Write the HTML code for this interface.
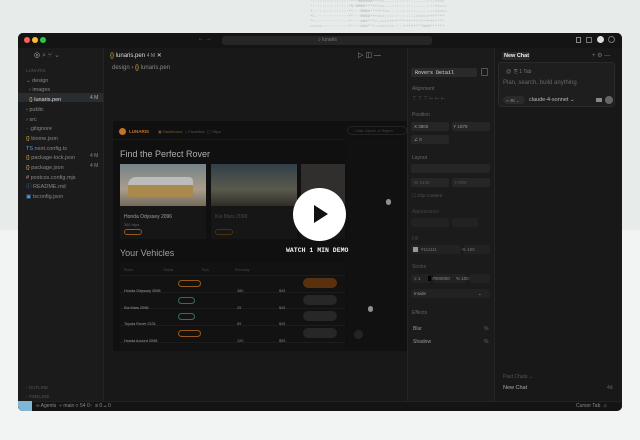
<!DOCTYPE html>
<html><head><style>
*{margin:0;padding:0;box-sizing:border-box}
body{width:640px;height:440px;overflow:hidden;font-family:"Liberation Sans",sans-serif;background:#f2f4f3;position:relative;color:#bbb}
.a{position:absolute}
.t{font-size:6px;white-space:nowrap}
</style></head><body>
<div class="a" style="left:0;top:0;width:640px;height:230px;background:#e7ebe9"></div>
<div class="a t" style="left:310px;top:0;width:170px;height:33px;color:#a9b8ae;font-family:'Liberation Mono',monospace;font-size:4px;line-height:5px;overflow:hidden;white-space:pre">···:::::::::::::·+**%%%%%%**+==----::::::::-----::::====
···:::::::::::::*%·%%%%***+++==---::::::::-------:::+====
+···::::::::::::*+···%%%#***+++==---::::::::------::=====
+=-·············+*···%%%#*++===:::::::::::--=====+++****
*+-·············+*···###***=-====+++****++****+*++++****
=====-:·········+*···###**+-====+==·:··++++****###*****+</div>
<div class="a" style="left:18px;top:33px;width:604px;height:378px;background:#181818;border-radius:5px;overflow:hidden">
 <div class="a" style="left:0;top:0;width:604px;height:15px;background:#141414"></div>
 <div class="a" style="left:6px;top:4px;width:6px;height:6px;border-radius:3px;background:#fe5f57"></div>
 <div class="a" style="left:14px;top:4px;width:6px;height:6px;border-radius:3px;background:#febc2e"></div>
 <div class="a" style="left:22px;top:4px;width:6px;height:6px;border-radius:3px;background:#28c840"></div>
 <div class="a t" style="left:180px;top:3px;color:#666">← →</div>
 <div class="a" style="left:204px;top:3px;width:210px;height:9px;background:#262626;border-radius:3px"></div>
 <div class="a t" style="left:300px;top:4px;color:#777;font-size:5px">⌕ lunaris</div>
 <div class="a" style="left:558px;top:4px;width:5px;height:6px;border:1px solid #888"></div>
 <div class="a" style="left:568px;top:4px;width:6px;height:6px;border:1px solid #777"></div>
 <div class="a" style="left:579px;top:3px;width:7px;height:7px;border-radius:4px;background:#ddd"></div>
 <div class="a" style="left:590px;top:3px;width:7px;height:7px;border-radius:4px;border:1px solid #777"></div>
 <!-- sidebar -->
 <div class="a" style="left:0;top:15px;width:86px;height:353px;background:#1b1b1b;border-right:1px solid #252525"></div>
 <div class="a t" style="left:16px;top:18px;color:#bbb;font-size:7px">◎ <span style="color:#777">⌕ ⑂ ⌄</span></div>
 <div class="a" style="left:0;top:60px;width:85px;height:9px;background:#2a2d30"></div>
 <div class="a t" style="left:8px;top:33px;color:#888;font-size:5.5px;line-height:9.7px"><span style="color:#555;font-size:4.5px">LUNARIS</span><br>⌄ design<br>&nbsp;&nbsp;› images<br>&nbsp;&nbsp;<span style="color:#e8b84a">{}</span> <span style="color:#ddd">lunaris.pen</span><br>› public<br>› src<br>· .gitignore<br><span style="color:#e8b84a">{}</span> biome.json<br><span style="color:#5a9ae0">TS</span> next.config.ts<br><span style="color:#e8b84a">{}</span> package-lock.json<br><span style="color:#e8b84a">{}</span> package.json<br><span style="color:#d9a">#</span> postcss.config.mjs<br><span style="color:#5a9ae0">ⓘ</span> README.md<br><span style="color:#5a9ae0">▣</span> tsconfig.json</div>
 <div class="a t" style="left:72px;top:62px;color:#aaa;font-size:5px">4 M</div>
 <div class="a t" style="left:72px;top:120px;color:#888;font-size:5px">4 M</div>
 <div class="a t" style="left:72px;top:130px;color:#888;font-size:5px">4 M</div>
 <div class="a t" style="left:8px;top:350px;color:#555;font-size:4.5px;line-height:9px">› OUTLINE<br>› TIMELINE</div>
 <!-- editor -->
 <div class="a" style="left:86px;top:15px;width:303px;height:353px;background:#181818"></div>
 <div class="a t" style="left:92px;top:19px;color:#ddd;font-size:6px"><span style="color:#e8b84a">{}</span> lunaris.pen <span style="color:#999;font-size:5px">4 M</span> ✕</div>
 <div class="a t" style="left:94px;top:32px;color:#888;font-size:6px">design › <span style="color:#e8b84a">{}</span> lunaris.pen</div>
 <div class="a t" style="left:340px;top:18px;color:#999;font-size:7px">▷ ◫ —</div>
 <!-- canvas frame -->
 <div class="a" style="left:95px;top:88px;width:294px;height:230px;background:#131313"></div>
 <div class="a" style="left:101px;top:95px;width:7px;height:7px;border-radius:4px;background:#e9872a"></div>
 <div class="a t" style="left:111px;top:96px;color:#e9872a;font-size:4.5px;font-weight:bold">LUNARIS</div>
 <div class="a t" style="left:140px;top:96px;color:#8a6a40;font-size:4px">▣ Dashboard &nbsp;<span style="color:#666">○ Favorites &nbsp;▢ Trips</span></div>
 <div class="a" style="left:329px;top:93px;width:60px;height:9px;border-radius:5px;border:1px solid #2a2a2a"></div>
 <div class="a t" style="left:335px;top:96px;color:#555;font-size:3.5px">○ Date, Airport, or Region</div>
 <div class="a" style="left:95px;top:106px;width:232px;height:1px;background:#222"></div>
 <div class="a t" style="left:102px;top:116px;color:#ccc;font-size:9px">Find the Perfect Rover</div>
 <div class="a" style="left:102px;top:131px;width:86px;height:75px;background:#1a1a1a"></div>
 <div class="a" style="left:102px;top:131px;width:86px;height:42px;background:linear-gradient(#8a9aa0,#c7b9a4 60%,#8a7d6a)"></div>
 <div class="a" style="left:110px;top:144px;width:65px;height:20px;background:#c9a05a;border-radius:8px 4px 3px 3px"></div>
 <div class="a" style="left:110px;top:144px;width:65px;height:8px;background:#ddd;border-radius:8px 4px 0 0"></div>
 <div class="a t" style="left:106px;top:181px;color:#bbb;font-size:5px">Honda Odyssey 2096</div>
 <div class="a t" style="left:106px;top:189px;color:#777;font-size:4px">380 trips</div>
 <div class="a" style="left:106px;top:196px;width:18px;height:6px;border:1px solid #b06a20;border-radius:3px"></div>
 <div class="a" style="left:193px;top:131px;width:86px;height:75px;background:#1a1a1a"></div>
 <div class="a" style="left:193px;top:131px;width:86px;height:42px;background:linear-gradient(#3a4a55,#6a6a5a 60%,#3a3530)"></div>
 <div class="a t" style="left:197px;top:181px;color:#555;font-size:5px">Kia Mars 2098</div>
 <div class="a" style="left:197px;top:196px;width:18px;height:6px;border:1px solid #5a3a15;border-radius:3px"></div>
 <div class="a" style="left:283px;top:131px;width:44px;height:42px;background:#3a3835"></div>
 <div class="a" style="left:283px;top:173px;width:44px;height:33px;background:#1a1a1a"></div>
 <div class="a t" style="left:102px;top:215px;color:#bbb;font-size:9px">Your Vehicles</div>
 <div class="a" style="left:102px;top:229px;width:225px;height:89px;background:#161616"></div>
 <div class="a" style="left:102px;top:242px;width:225px;height:1px;background:#222"></div>
 <div class="a" style="left:102px;top:259px;width:225px;height:1px;background:#222"></div>
 <div class="a" style="left:102px;top:275px;width:225px;height:1px;background:#222"></div>
 <div class="a" style="left:102px;top:292px;width:225px;height:1px;background:#222"></div>
 <div class="a" style="left:102px;top:309px;width:225px;height:1px;background:#222"></div>
 <div class="a t" style="left:106px;top:235px;color:#555;font-size:3.5px">Rover<span style="margin-left:30px">Status</span><span style="margin-left:28px">Trips</span><span style="margin-left:26px">Price/day</span></div>
 <div class="a t" style="left:106px;top:250px;color:#bbb;font-size:3.8px;line-height:16.5px">Honda Odyssey 2096<br>Kia Mars 2098<br>Toyota Rover 2101<br>Honda Accord 2098</div>
 <div class="a t" style="left:219px;top:250px;color:#999;font-size:3.8px;line-height:16.5px">380<br>25<br>89<br>120</div>
 <div class="a t" style="left:261px;top:250px;color:#999;font-size:3.8px;line-height:16.5px">$45<br>$45<br>$45<br>$55</div>
 <div class="a" style="left:160px;top:247px;width:23px;height:7px;border:1px solid #b06a20;border-radius:4px"></div>
 <div class="a" style="left:160px;top:264px;width:17px;height:7px;border:1px solid #4a7a80;border-radius:4px"></div>
 <div class="a" style="left:160px;top:280px;width:17px;height:7px;border:1px solid #4a7a80;border-radius:4px"></div>
 <div class="a" style="left:160px;top:297px;width:23px;height:7px;border:1px solid #b06a20;border-radius:4px"></div>
 <div class="a" style="left:285px;top:245px;width:34px;height:10px;background:#6a3a12;border-radius:5px"></div>
 <div class="a" style="left:285px;top:262px;width:34px;height:10px;background:#2e2e2e;border-radius:5px"></div>
 <div class="a" style="left:285px;top:278px;width:34px;height:10px;background:#2e2e2e;border-radius:5px"></div>
 <div class="a" style="left:285px;top:295px;width:34px;height:10px;background:#2e2e2e;border-radius:5px"></div>
 <div class="a" style="left:329px;top:106px;width:60px;height:212px;background:#151515"></div>
 <div class="a" style="left:368px;top:166px;width:5px;height:6px;border-radius:3px;background:#aaa"></div>
 <div class="a" style="left:350px;top:273px;width:5px;height:6px;border-radius:3px;background:#aaa"></div>
 <div class="a" style="left:336px;top:297px;width:9px;height:9px;border-radius:5px;background:#2a2a2a"></div>
 <div class="a" style="left:95px;top:88px;width:294px;height:230px;background:rgba(0,0,0,0.15)"></div>
 <!-- play overlay -->
 <div class="a" style="left:275px;top:155px;width:53px;height:53px;border-radius:27px;background:#fff"></div>
 <div class="a" style="left:296px;top:172px;width:0;height:0;border-left:14px solid #111;border-top:9px solid transparent;border-bottom:9px solid transparent"></div>
 <div class="a t" style="left:268px;top:214px;color:#eee;font-family:'Liberation Mono',monospace;font-size:6.5px;font-weight:bold">WATCH 1 MIN DEMO</div>
 <!-- properties -->
 <div class="a" style="left:389px;top:15px;width:88px;height:353px;background:#1b1b1b;border-left:1px solid #252525;border-right:1px solid #252525"></div>
 <div class="a" style="left:393px;top:35px;width:66px;height:9px;background:#2a2a2a;border-radius:2px"></div>
 <div class="a t" style="left:397px;top:37px;color:#ddd;font-family:'Liberation Mono',monospace;font-size:5px">Rovers Detail</div>
 <div class="a" style="left:463px;top:35px;width:7px;height:8px;border:1px solid #555;border-radius:1px"></div>
 <div class="a t" style="left:394px;top:53px;color:#666;font-size:5px">Alignment</div>
 <div class="a t" style="left:394px;top:63px;color:#555;font-size:5px">⊤ ⊤ ⊤ ⊢ ⊢ ⊢</div>
 <div class="a t" style="left:394px;top:79px;color:#666;font-size:5px">Position</div>
 <div class="a" style="left:393px;top:89px;width:38px;height:9px;background:#262626;border-radius:2px"></div>
 <div class="a" style="left:434px;top:89px;width:38px;height:9px;background:#262626;border-radius:2px"></div>
 <div class="a" style="left:393px;top:102px;width:38px;height:9px;background:#262626;border-radius:2px"></div>
 <div class="a t" style="left:396px;top:91px;color:#999;font-size:4.5px">X 3800<span style="margin-left:25px">Y 1879</span></div>
 <div class="a t" style="left:396px;top:104px;color:#999;font-size:4.5px">∠ 0</div>
 <div class="a t" style="left:394px;top:122px;color:#666;font-size:5px">Layout</div>
 <div class="a" style="left:393px;top:131px;width:79px;height:9px;background:#262626;border-radius:2px"></div>
 <div class="a" style="left:393px;top:145px;width:38px;height:9px;background:#262626;border-radius:2px"></div>
 <div class="a" style="left:434px;top:145px;width:38px;height:9px;background:#262626;border-radius:2px"></div>
 <div class="a t" style="left:396px;top:147px;color:#555;font-size:4.5px">W 1440<span style="margin-left:25px">H 900</span></div>
 <div class="a t" style="left:394px;top:160px;color:#555;font-size:4.5px">☐ Clip Content</div>
 <div class="a t" style="left:394px;top:176px;color:#444;font-size:5px">Appearance</div>
 <div class="a" style="left:393px;top:185px;width:38px;height:9px;background:#222;border-radius:2px"></div>
 <div class="a" style="left:434px;top:185px;width:26px;height:9px;background:#222;border-radius:2px"></div>
 <div class="a t" style="left:394px;top:203px;color:#444;font-size:5px">Fill</div>
 <div class="a" style="left:393px;top:212px;width:50px;height:9px;background:#222;border-radius:2px"></div>
 <div class="a" style="left:446px;top:212px;width:26px;height:9px;background:#222;border-radius:2px"></div>
 <div class="a" style="left:395px;top:214px;width:5px;height:5px;background:#999"></div>
 <div class="a t" style="left:403px;top:214px;color:#777;font-size:4.5px">#111111<span style="margin-left:25px">% 100</span></div>
 <div class="a t" style="left:394px;top:231px;color:#555;font-size:5px">Stroke</div>
 <div class="a" style="left:393px;top:241px;width:19px;height:9px;background:#222;border-radius:2px"></div>
 <div class="a" style="left:415px;top:241px;width:33px;height:9px;background:#222;border-radius:2px"></div>
 <div class="a" style="left:451px;top:241px;width:21px;height:9px;background:#222;border-radius:2px"></div>
 <div class="a t" style="left:396px;top:243px;color:#888;font-size:4.5px">≡ 1<span style="margin-left:8px"><span style="background:#000;color:#000">■</span> #000000</span><span style="margin-left:6px">% 100</span></div>
 <div class="a" style="left:393px;top:256px;width:79px;height:9px;background:#222;border-radius:2px"></div>
 <div class="a t" style="left:396px;top:258px;color:#999;font-size:4.5px">Inside<span style="margin-left:52px">⌄</span></div>
 <div class="a t" style="left:394px;top:277px;color:#666;font-size:5px">Effects</div>
 <div class="a t" style="left:395px;top:290px;color:#999;font-size:5px;line-height:13px">Blur<br>Shadow</div>
 <div class="a t" style="left:466px;top:290px;color:#666;font-size:5px;line-height:13px">%<br>%</div>
 <!-- chat -->
 <div class="a" style="left:477px;top:15px;width:127px;height:353px;background:#181818"></div>
 <div class="a" style="left:484px;top:19px;width:28px;height:8px;background:#2a2a2a;border-radius:2px"></div>
 <div class="a t" style="left:486px;top:20px;color:#eee;font-size:5.5px;font-weight:bold">New Chat</div>
 <div class="a t" style="left:574px;top:19px;color:#777;font-size:6px">+ ⚙ —</div>
 <div class="a" style="left:480px;top:29px;width:117px;height:45px;background:#1e1e1e;border:1px solid #2a2a2a;border-radius:3px"></div>
 <div class="a t" style="left:488px;top:36px;color:#777;font-size:5px">@ &nbsp;⎘ 1 Tab</div>
 <div class="a t" style="left:485px;top:47px;color:#666;font-size:6px">Plan, search, build anything</div>
 <div class="a" style="left:485px;top:63px;width:22px;height:8px;background:#2a2a2a;border-radius:4px"></div>
 <div class="a t" style="left:488px;top:65px;color:#888;font-size:4px">∞ ⌘I ⌄</div>
 <div class="a t" style="left:511px;top:64px;color:#bbb;font-size:5.5px">claude-4-sonnet ⌄</div>
 <div class="a" style="left:578px;top:65px;width:6px;height:4px;background:#888"></div>
 <div class="a" style="left:587px;top:63px;width:8px;height:8px;border-radius:4px;background:#666"></div>
 <div class="a t" style="left:485px;top:341px;color:#555;font-size:5px">Past Chats ⌄</div>
 <div class="a t" style="left:485px;top:352px;color:#aaa;font-size:5.5px">New Chat</div>
 <div class="a t" style="left:589px;top:352px;color:#666;font-size:5px">4d</div>
 <!-- status bar -->
 <div class="a" style="left:0;top:368px;width:604px;height:10px;background:#141414;border-top:1px solid #222"></div>
 <div class="a" style="left:0;top:368px;width:14px;height:10px;background:#7fb8d4"></div>
 <div class="a t" style="left:18px;top:370px;color:#888;font-size:5px">∞ Agents &nbsp;⑂ main ⟳ 54 0↑ &nbsp;⊗ 0 ⚠ 0</div>
 <div class="a t" style="left:558px;top:370px;color:#888;font-size:5px">Cursor Tab &nbsp;♫</div>
</div>
</body></html>
